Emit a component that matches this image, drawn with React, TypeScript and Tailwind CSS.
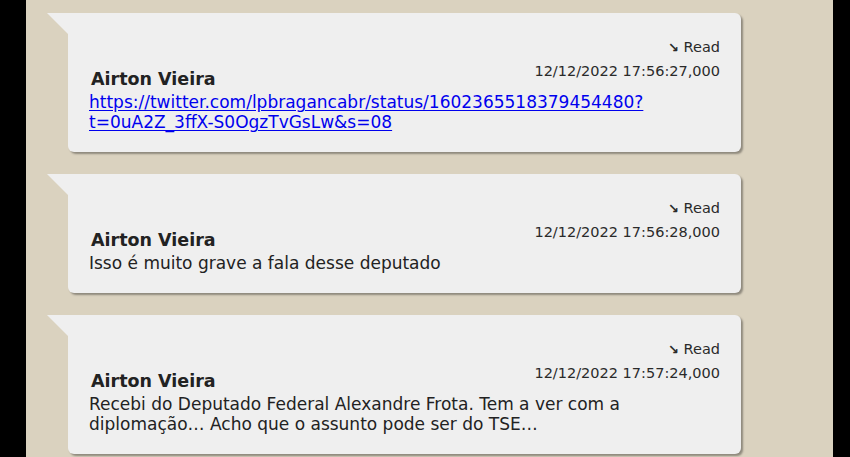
import React from "react";

interface Message {
  author: string;
  time: string;
  body: React.ReactNode;
}

const messages: Message[] = [
  {
    author: "Airton Vieira",
    time: "12/12/2022 17:56:27,000",
    body: (
      <a
        href="#"
        className="text-[#0000ee] underline underline-offset-2"
      >
        https://twitter.com/lpbragancabr/status/1602365518379454480?
        <br />
        t=0uA2Z_3ffX-S0OgzTvGsLw&amp;s=08
      </a>
    ),
  },
  {
    author: "Airton Vieira",
    time: "12/12/2022 17:56:28,000",
    body: "Isso é muito grave a fala desse deputado",
  },
  {
    author: "Airton Vieira",
    time: "12/12/2022 17:57:24,000",
    body: (
      <>
        Recebi do Deputado Federal Alexandre Frota. Tem a ver com a
        <br />
        diplomação… Acho que o assunto pode ser do TSE…
      </>
    ),
  },
];

const Bubble: React.FC<Message> = ({ author, time, body }) => {
  return (
    <div className="relative ml-[42px] w-[673px] shrink-0">
      {/* tail */}
      <div className="absolute left-[-21px] top-0 h-[21px] w-[21px] bg-[#efefef] [clip-path:polygon(0_0,100%_0,100%_100%)]" />
      <div className="rounded-[6px] rounded-tl-none bg-[#efefef] px-[21px] pt-[24px] pb-[20px] shadow-[2px_2px_2px_rgba(0,0,0,0.35)]">
        <div className="text-right text-[14.5px] leading-[20px] text-[#2a2a2a]">
          <span className="text-[13px] font-bold">↘</span> Read
        </div>
        <div className="mt-[3px] flex items-start justify-between">
          <div className="ml-[2px] mt-[7px] text-[17.5px] font-bold leading-[22px] text-[#222]">
            {author}
          </div>
          <div className="text-[14.5px] leading-[20px] text-[#2a2a2a]">{time}</div>
        </div>
        <div className="mt-[2px] text-[17px] leading-[20px] text-[#222]">
          {body}
        </div>
      </div>
    </div>
  );
};

export default function App() {
  return (
    <div className="flex h-[457px] w-[850px] overflow-hidden bg-black font-['DejaVu_Sans',sans-serif]">
      <div className="ml-[26px] mr-[17px] flex flex-1 flex-col gap-[22px] bg-[#dad2bf] pt-[13px]">
        {messages.map((m) => (
          <Bubble key={m.time} {...m} />
        ))}
      </div>
    </div>
  );
}
